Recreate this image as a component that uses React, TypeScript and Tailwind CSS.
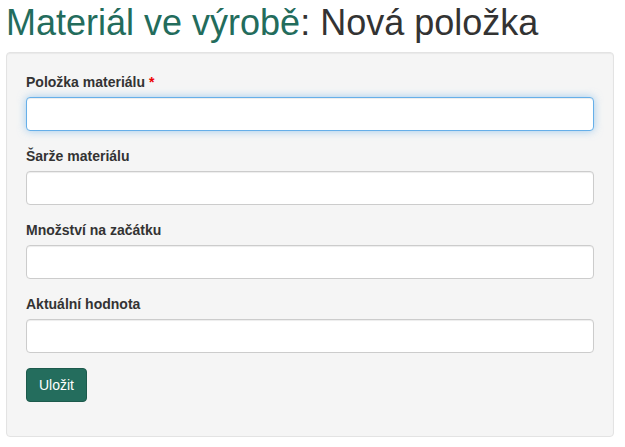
const fields = [
  { label: "Položka materiálu", required: true, focused: true },
  { label: "Šarže materiálu" },
  { label: "Množství na začátku" },
  { label: "Aktuální hodnota" },
];

export default function App() {
  return (
    <div className="pl-[6px] pr-[11px] font-['Liberation_Sans',Arial,sans-serif] text-[14px] leading-[20px] text-[#333]">
      <h1 className="mt-[3px] mb-[9px] text-[36px] leading-[1.1] font-normal">
        <span className="text-[#236c5c]">Materiál ve výrobě</span>: Nová položka
      </h1>
      <div className="rounded-[4px] border border-[#e3e3e3] bg-[#f5f5f5] p-[19px] shadow-[inset_0_1px_1px_rgba(0,0,0,0.05)]">
        <form>
          {fields.map((f) => (
            <div key={f.label} className="mb-[15px]">
              <label className="mb-[5px] block font-bold">
                {f.label}
                {f.required && <span className="text-[#e00]"> *</span>}
              </label>
              <input
                type="text"
                className={
                  f.focused
                    ? "block h-[34px] w-full rounded-[4px] border border-[#66afe9] bg-white px-3 py-[6px] outline-none shadow-[inset_0_1px_1px_rgba(0,0,0,0.075),0_0_8px_rgba(102,175,233,0.6)]"
                    : "block h-[34px] w-full rounded-[4px] border border-[#ccc] bg-white px-3 py-[6px] outline-none shadow-[inset_0_1px_1px_rgba(0,0,0,0.075)]"
                }
              />
            </div>
          ))}
          <div className="mt-[4px] mb-[15px]">
            <button
              type="button"
              className="h-[34px] rounded-[4px] border border-[#1d5a4c] bg-[#246d5d] px-3 py-[6px] text-[14px] text-white"
            >
              Uložit
            </button>
          </div>
        </form>
      </div>
    </div>
  );
}
